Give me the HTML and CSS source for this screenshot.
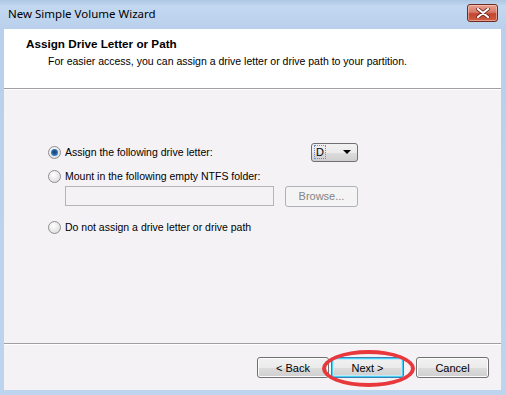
FILE: index.html
```html
<!DOCTYPE html>
<html>
<head>
<meta charset="utf-8">
<link rel="stylesheet" href="styles.css">
</head>
<body>
<div class="window">
  <div class="titlebar">
    <span class="title">New Simple Volume Wizard</span>
    <div class="close">
      <svg width="14" height="10" viewBox="0 0 14 10"><path d="M2 1 L12 9 M12 1 L2 9" stroke="#6b1f17" stroke-width="3.6" stroke-linecap="round"/><path d="M2 1 L12 9 M12 1 L2 9" stroke="#fff" stroke-width="2.2" stroke-linecap="round"/></svg>
    </div>
  </div>
  <div class="client">
    <div class="header">
      <div class="h-title">Assign Drive Letter or Path</div>
      <div class="h-sub">For easier access, you can assign a drive letter or drive path to your partition.</div>
    </div>
    <div class="sep"></div>
    <div class="content">
      <div class="row row1">
        <span class="radio checked"></span>
        <span class="label">Assign the following drive letter:</span>
        <div class="combo"><span class="combo-text">D</span><span class="arrow"></span></div>
      </div>
      <div class="row row2">
        <span class="radio"></span>
        <span class="label">Mount in the following empty NTFS folder:</span>
      </div>
      <div class="row row3">
        <div class="textbox"></div>
        <div class="btn disabled browse">Browse...</div>
      </div>
      <div class="row row4">
        <span class="radio"></span>
        <span class="label">Do not assign a drive letter or drive path</span>
      </div>
    </div>
    <div class="sep"></div>
    <div class="footer">
      <div class="btn back">&lt; Back</div>
      <div class="btn next">Next &gt;</div>
      <div class="btn cancel">Cancel</div>
      <div class="ellipse"></div>
    </div>
  </div>
</div>
</body>
</html>
```
FILE: styles.css
```css
html, body {
  margin: 0;
  padding: 0;
}
body {
  width: 506px;
  height: 395px;
  overflow: hidden;
  background: #bcd3ee;
}
.window {
  width: 506px;
  height: 395px;
  display: flex;
  flex-direction: column;
  background: linear-gradient(to bottom, #aec6e3 0px, #c3d8f0 6px, #b9d0ec 29px, #bdd4ef 100%);
}
.titlebar {
  height: 29px;
  display: flex;
  align-items: center;
  justify-content: space-between;
  padding: 0 8px 0 8px;
  box-sizing: border-box;
}
.title {
  font-family: "Noto Sans", "Open Sans", sans-serif;
  font-size: 11.5px;
  color: #000;
  margin-top: -2px;
}
.close {
  width: 29px;
  height: 16px;
  margin-top: -4px;
  border: 1px solid #6e2a23;
  border-radius: 3px;
  background: linear-gradient(to bottom, #e8a192 0%, #d67a68 45%, #c2452f 55%, #cf5d43 100%);
  display: flex;
  align-items: center;
  justify-content: center;
  box-shadow: inset 0 0 0 1px rgba(255,220,210,0.5);
}
.client {
  flex: 1;
  margin: 0 5px 5px 4px;
  background: #f5f2f5;
  display: flex;
  flex-direction: column;
  font-family: "Liberation Sans", Arial, sans-serif;
  font-size: 10.5px;
  color: #000;
}
.header {
  height: 59px;
  background: #fff;
  box-sizing: border-box;
  padding: 8px 0 0 22px;
}
.h-title {
  font-weight: bold;
  font-size: 11.7px;
  line-height: 14px;
}
.h-sub {
  padding-left: 22px;
  line-height: 14px;
  margin-top: 3px;
}
.sep {
  height: 1px;
  background: #a0a0a0;
  border-bottom: 1px solid #fff;
}
.content {
  flex: 1;
  padding: 52px 0 0 44px;
  box-sizing: border-box;
}
.row {
  display: flex;
  align-items: center;
}
.row1 {
  height: 20px;
  width: 310px;
}
.row2 {
  margin-top: 7px;
  height: 14px;
}
.row3 {
  margin-top: 2px;
  padding-left: 17px;
  height: 22px;
}
.row4 {
  margin-top: 13px;
  height: 14px;
}
.radio {
  width: 11px;
  height: 11px;
  border-radius: 50%;
  border: 1px solid #8f8f8f;
  background: radial-gradient(circle at 40% 35%, #ffffff 0%, #e6e6e6 60%, #d0d0d0 100%);
  box-sizing: content-box;
  flex: none;
  position: relative;
  margin-right: 4px;
}
.radio.checked::after {
  content: "";
  position: absolute;
  left: 2px;
  top: 2px;
  width: 7px;
  height: 7px;
  border-radius: 50%;
  background: radial-gradient(circle at 50% 45%, #1a3d6e 0%, #255f9e 40%, #3d8bd4 75%, #8fc4ef 100%);
}
.label {
  white-space: nowrap;
}
.combo {
  margin-left: auto;
  width: 47px;
  height: 19px;
  border: 1px solid #707070;
  border-radius: 3px;
  background: linear-gradient(to bottom, #f2f2f2 0%, #ebebeb 50%, #dddddd 51%, #cfcfcf 100%);
  display: flex;
  align-items: center;
  justify-content: space-between;
  padding: 0 6px 0 3px;
  box-sizing: border-box;
}
.combo-text {
  color: #000;
  outline: 1px dotted #6f86d8;
  line-height: 12px;
  padding: 0 1px;
  font-size: 11px;
}
.arrow {
  width: 0;
  height: 0;
  border-left: 4px solid transparent;
  border-right: 4px solid transparent;
  border-top: 4px solid #000;
}
.textbox {
  width: 209px;
  height: 20px;
  border: 1px solid #b5b5b5;
  background: #f5f2f5;
  box-sizing: border-box;
}
.btn {
  height: 21px;
  border: 1px solid #707070;
  border-radius: 3px;
  box-sizing: border-box;
  display: flex;
  align-items: center;
  justify-content: center;
  background: linear-gradient(to bottom, #f2f2f2 0%, #ebebeb 50%, #dddddd 51%, #cfcfcf 100%);
  box-shadow: inset 0 0 0 1px #fcfcfc;
  color: #000;
  font-size: 11px;
}
.btn.disabled {
  border-color: #adb2b5;
  background: #f4f4f4;
  box-shadow: none;
  color: #838383;
}
.browse {
  width: 73px;
  margin-left: 11px;
  height: 21px;
}
.footer {
  height: 45px;
  display: flex;
  align-items: flex-start;
  justify-content: flex-end;
  padding: 12px 12px 0 0;
  box-sizing: border-box;
  position: relative;
}
.back {
  width: 72px;
}
.next {
  width: 73px;
  margin-left: 2px;
  border-color: #3c7fb1;
  box-shadow: inset 0 0 0 1px #48d0f5, inset 0 0 0 2px #c2e9f7;
}
.cancel {
  width: 73px;
  margin-left: 12px;
}
.ellipse {
  position: absolute;
  left: 318px;
  top: 5px;
  width: 93px;
  height: 37px;
  border: 4px solid #e8383c;
  border-radius: 50%;
  box-sizing: border-box;
}
```
